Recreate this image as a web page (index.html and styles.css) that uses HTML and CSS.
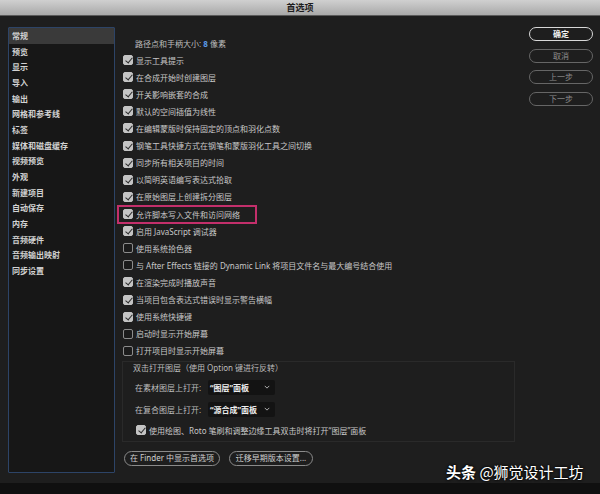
FILE: index.html
```html
<!DOCTYPE html>
<html lang="zh">
<head>
<meta charset="utf-8">
<title>首选项</title>
<link rel="stylesheet" href="styles.css">
</head>
<body>
<div class="window">
  <div class="titlebar">首选项</div>
  <div class="main">
    <ul class="sidebar">
      <li class="selected">常规</li>
      <li>预览</li>
      <li>显示</li>
      <li>导入</li>
      <li>输出</li>
      <li>网格和参考线</li>
      <li>标签</li>
      <li>媒体和磁盘缓存</li>
      <li>视频预览</li>
      <li>外观</li>
      <li>新建项目</li>
      <li>自动保存</li>
      <li>内存</li>
      <li>音频硬件</li>
      <li>音频输出映射</li>
      <li>同步设置</li>
    </ul>
    <div class="content">
      <div class="header">路径点和手柄大小: <span class="num">8</span> 像素</div>
      <div class="row"><span class="cb on"></span>显示工具提示</div>
      <div class="row"><span class="cb on"></span>在合成开始时创建图层</div>
      <div class="row"><span class="cb on"></span>开关影响嵌套的合成</div>
      <div class="row"><span class="cb on"></span>默认的空间插值为线性</div>
      <div class="row"><span class="cb on"></span>在编辑蒙版时保持固定的顶点和羽化点数</div>
      <div class="row"><span class="cb on"></span>钢笔工具快捷方式在钢笔和蒙版羽化工具之间切换</div>
      <div class="row"><span class="cb on"></span>同步所有相关项目的时间</div>
      <div class="row"><span class="cb on"></span>以简明英语编写表达式拾取</div>
      <div class="row"><span class="cb on"></span>在原始图层上创建拆分图层</div>
      <div class="row marked"><span class="cb on"></span>允许脚本写入文件和访问网络<span class="mark"></span></div>
      <div class="row"><span class="cb on"></span>启用 JavaScript 调试器</div>
      <div class="row"><span class="cb"></span>使用系统拾色器</div>
      <div class="row"><span class="cb"></span>与 After Effects 链接的 Dynamic Link 将项目文件名与最大编号结合使用</div>
      <div class="row"><span class="cb on"></span>在渲染完成时播放声音</div>
      <div class="row"><span class="cb on"></span>当项目包含表达式错误时显示警告横幅</div>
      <div class="row"><span class="cb on"></span>使用系统快捷键</div>
      <div class="row"><span class="cb"></span>启动时显示开始屏幕</div>
      <div class="row"><span class="cb"></span>打开项目时显示开始屏幕</div>
      <div class="group">
        <div class="group-title">双击打开图层（使用 Option 键进行反转）</div>
        <div class="field"><span class="label">在素材图层上打开:</span><span class="select">“图层”面板<svg class="chev" viewBox="0 0 8 5" width="6" height="4"><polyline points="1,1 4,4 7,1" fill="none" stroke="#bbb" stroke-width="1.2"/></svg></span></div>
        <div class="field"><span class="label">在复合图层上打开:</span><span class="select">“源合成”面板<svg class="chev" viewBox="0 0 8 5" width="6" height="4"><polyline points="1,1 4,4 7,1" fill="none" stroke="#bbb" stroke-width="1.2"/></svg></span></div>
        <div class="row inner"><span class="cb on"></span>使用绘图、Roto 笔刷和调整边缘工具双击时将打开“图层”面板</div>
      </div>
      <div class="bottom-buttons">
        <span class="pill wide">在 Finder 中显示首选项</span>
        <span class="pill mid">迁移早期版本设置...</span>
      </div>
    </div>
    <div class="buttons">
      <span class="btn primary">确定</span>
      <span class="btn">取消</span>
      <span class="btn">上一步</span>
      <span class="btn">下一步</span>
    </div>
  </div>
  <div class="footer"></div>
  <div class="watermark"><b>头条</b> @狮觉设计工坊</div>
</div>
</body>
</html>
```

FILE: styles.css
```css
* { box-sizing: border-box; }
html, body { margin: 0; padding: 0; }
body {
  width: 600px;
  height: 494px;
  overflow: hidden;
  background: #1e1e1e;
  font-family: "Noto Sans", "Noto Sans CJK SC", sans-serif;
  color: #c6c6c6;
}
.window {
  position: relative;
  width: 600px;
  height: 494px;
  display: flex;
  flex-direction: column;
}
.titlebar {
  height: 16px;
  flex: none;
  background: linear-gradient(#d0d0d0, #a9a9a9);
  border-bottom: 1px solid #5a5a5a;
  color: #1e1e1e;
  font-size: 9px;
  font-weight: bold;
  line-height: 15px;
  text-align: center;
}
.main {
  flex: 1;
  display: flex;
  padding: 11px 7px 0 8px;
}
.sidebar {
  list-style: none;
  margin: 0;
  padding: 0;
  width: 107px;
  height: 446px;
  flex: none;
  background: #171717;
  border: 1.5px solid #2d4467;
  border-radius: 1px;
}
.sidebar li {
  height: 15.66px;
  line-height: 15.66px;
  font-size: 8px;
  font-weight: bold;
  color: #d2d2d2;
  padding-left: 3px;
}
.sidebar li.selected {
  background: #3a3a3a;
}
.content {
  flex: 1;
  padding-left: 7px;
  padding-top: 7.5px;
  font-size: 8px;
}
.header {
  height: 17px;
  line-height: 17px;
  padding-left: 13px;
  color: #bdbdbd;
}
.num { color: #5b9ae8; font-weight: bold; }
.row {
  height: 17.12px;
  display: flex;
  align-items: center;
  white-space: nowrap;
  color: #c8c8c8;
}
.cb {
  width: 10px;
  height: 10px;
  border-radius: 2px;
  border: 1px solid #8c8c8c;
  background: #1b1b1b;
  margin: 0 3px 0 1px;
  flex: none;
  position: relative;
}
.cb.on {
  background: #c4c4c4;
  border-color: #c4c4c4;
}
.cb.on::after {
  content: "";
  position: absolute;
  left: 2.5px;
  top: 0px;
  width: 3px;
  height: 6px;
  border-right: 1.8px solid #2a2a2a;
  border-bottom: 1.8px solid #2a2a2a;
  transform: rotate(40deg);
}
.marked { position: relative; }
.mark {
  position: absolute;
  left: -5px;
  top: -0.5px;
  width: 140px;
  height: 19px;
  border: 2px solid #c32f6b;
}
.group {
  margin-top: 2px;
  width: 393px;
  height: 81px;
  border: 1px solid #2a2a2a;
  padding: 0 0 0 10px;
}
.group-title {
  height: 14px;
  line-height: 12px;
  color: #bdbdbd;
}
.field {
  height: 22px;
  display: flex;
  align-items: center;
  padding-left: 2px;
}
.label { width: 73px; flex: none; color: #bdbdbd; }
.select {
  width: 67px;
  height: 15px;
  background: #131313;
  border-radius: 2px;
  color: #eeeeee;
  font-weight: bold;
  line-height: 15px;
  padding-left: 2px;
  position: relative;
}
.chev {
  position: absolute;
  right: 5px;
  top: 5.5px;
}
.row.inner {
  padding-left: 2px;
  height: 20px;
}
.bottom-buttons {
  display: flex;
  gap: 9px;
  margin-top: 9px;
  padding-left: 2px;
}
.pill {
  height: 15px;
  line-height: 12px;
  border: 1.5px solid #8a8a8a;
  border-radius: 8px;
  color: #cfcfcf;
  text-align: center;
}
.pill.wide { width: 96px; }
.pill.mid { width: 84px; }
.buttons {
  width: 64px;
  flex: none;
  display: flex;
  flex-direction: column;
  gap: 7.5px;
  padding-top: 0;
}
.btn {
  height: 14px;
  border: 1.5px solid #666;
  border-radius: 7px;
  font-size: 8px;
  line-height: 11px;
  text-align: center;
  color: #8e8e8e;
}
.btn.primary {
  border-color: #d8d8d8;
  color: #f2f2f2;
  font-weight: bold;
}
.footer {
  height: 11px;
  flex: none;
  background: #101010;
}
.watermark {
  position: absolute;
  left: 446px;
  top: 462px;
  font-family: "Noto Sans CJK SC", "Noto Sans", sans-serif;
  font-size: 15px;
  line-height: 20px;
  color: #ffffff;
  text-shadow: 0 0 2px #000, 0 0 3px #000;
  white-space: nowrap;
}
.watermark b { font-weight: bold; }
```
